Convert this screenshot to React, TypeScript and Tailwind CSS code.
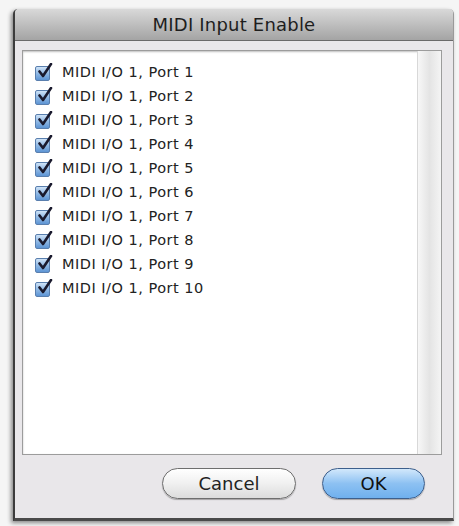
import React from "react";

const ports = Array.from({ length: 10 }, (_, i) => `MIDI I/O 1, Port ${i + 1}`);

const CheckBox: React.FC = () => (
  <span className="relative inline-block w-[15px] h-[15px] shrink-0 rounded-[2px] border border-[#5a7fae] bg-gradient-to-b from-[#cfe3f7] via-[#8fb8e4] to-[#5d94d4]">
    <svg
      viewBox="0 0 16 16"
      className="absolute left-[1px] top-[-4px] w-[16px] h-[16px]"
    >
      <path
        d="M2.5 8.5 L6 13 L14 1"
        fill="none"
        stroke="#1a1a2e"
        strokeWidth="2.6"
        strokeLinecap="round"
        strokeLinejoin="round"
      />
    </svg>
  </span>
);

export default function App() {
  return (
    <div
      className="w-[459px] h-[526px] bg-[#f5f5f5] pt-[9px] pl-[13px]"
      style={{ fontFamily: '"DejaVu Sans", "Lucida Grande", sans-serif' }}
    >
      <div className="w-[441px] h-[512px] flex flex-col bg-[#e9e7ea] rounded-t-[5px] border-l-2 border-l-[#3c3c3c] border-r border-r-[#9a9a9a] border-b-[3px] border-b-[#4a4a4a] shadow-[-2px_2px_4px_rgba(0,0,0,0.45)]">
        {/* Title bar */}
        <div className="h-[32px] shrink-0 flex items-center justify-center rounded-t-[4px] bg-gradient-to-b from-[#d9d9d9] to-[#a4a4a4] border-b border-[#6a6a6a]">
          <span className="text-[18px] leading-none text-[#1e1e1e] tracking-[0.2px]">MIDI Input Enable</span>
        </div>

        {/* List */}
        <div className="mt-[9px] ml-[7px] w-[420px] h-[405px] flex bg-white border border-[#9c9c9c] shadow-[inset_0_1px_2px_rgba(0,0,0,0.25)]">
          <div className="flex-1 pt-[10px] pl-[12px]">
            {ports.map((p) => (
              <div key={p} className="h-[24px] flex items-center gap-[12px]">
                <CheckBox />
                <span className="text-[14.5px] text-[#222] tracking-[0.5px]">{p}</span>
              </div>
            ))}
          </div>
          <div className="w-[24px] border-l border-[#d8d8d8] bg-gradient-to-r from-[#f7f7f7] via-[#e4e4e4] to-[#f4f4f4]" />
        </div>

        {/* Buttons */}
        <div className="flex justify-end items-start gap-[26px] pt-[13px] pr-[28px]">
          <button className="w-[134px] h-[31px] rounded-full border border-[#6e6e6e] bg-gradient-to-b from-[#ffffff] via-[#f0f0f0] to-[#dcdcdc] shadow-[0_1px_1px_rgba(0,0,0,0.3)] text-[18px] leading-none text-[#222]">
            Cancel
          </button>
          <button className="w-[103px] h-[31px] rounded-full border border-[#3d5f8c] bg-gradient-to-b from-[#d2e8fb] via-[#8dc1f2] to-[#6fb0ee] shadow-[0_1px_1px_rgba(0,0,0,0.3)] text-[18px] leading-none text-[#111]">
            OK
          </button>
        </div>
      </div>
    </div>
  );
}
